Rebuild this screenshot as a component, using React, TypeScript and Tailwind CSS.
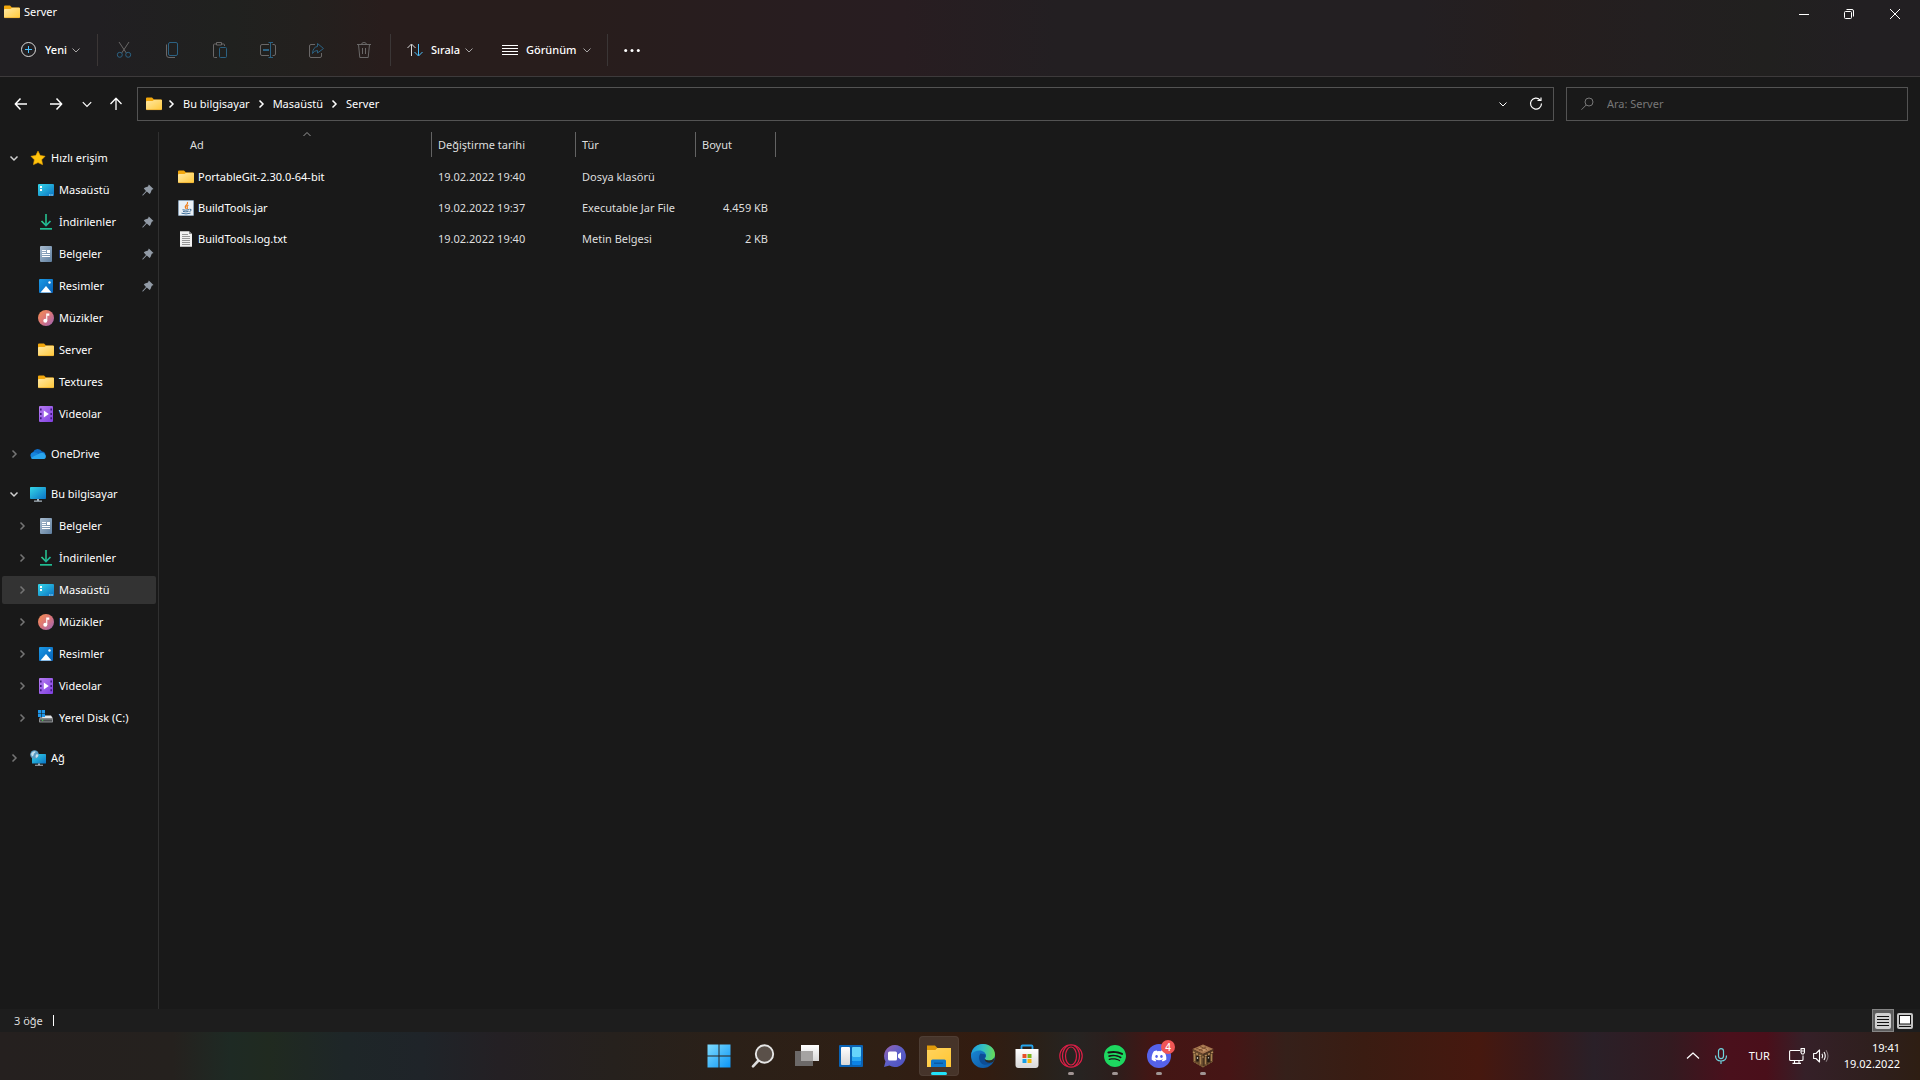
import React from "react";
import { FaDiscord } from "react-icons/fa";
import { SiSpotify } from "react-icons/si";

type IconProps = { className?: string };

function Gradients() {
  return (
    <svg className="absolute size-0" aria-hidden="true">
      <defs>
        <linearGradient id="gFolder" x1="0" y1="0" x2="1" y2="1">
          <stop offset="0" stopColor="#ffe9a6" />
          <stop offset="1" stopColor="#ffc83a" />
        </linearGradient>
        <linearGradient id="gScreen" x1="0" y1="0" x2="1" y2="1">
          <stop offset="0" stopColor="#35d6e8" />
          <stop offset="1" stopColor="#0a72c4" />
        </linearGradient>
        <linearGradient id="gDown" x1="0" y1="0" x2="1" y2="1">
          <stop offset="0" stopColor="#2fd08a" />
          <stop offset="1" stopColor="#14a89e" />
        </linearGradient>
        <linearGradient id="gDoc" x1="0" y1="0" x2="1" y2="1">
          <stop offset="0" stopColor="#a9bccf" />
          <stop offset="1" stopColor="#5f7f9f" />
        </linearGradient>
        <linearGradient id="gPic" x1="0" y1="0" x2="1" y2="1">
          <stop offset="0" stopColor="#1c9ae6" />
          <stop offset="1" stopColor="#0560b8" />
        </linearGradient>
        <linearGradient id="gMusic" x1="0" y1="0" x2="1" y2="1">
          <stop offset="0" stopColor="#f78f4e" />
          <stop offset="0.5" stopColor="#d9757a" />
          <stop offset="1" stopColor="#9a62b8" />
        </linearGradient>
        <linearGradient id="gVideo" x1="0" y1="0" x2="1" y2="1">
          <stop offset="0" stopColor="#b67cf2" />
          <stop offset="1" stopColor="#7f3fe0" />
        </linearGradient>
        <linearGradient id="gWin" x1="0" y1="0" x2="1" y2="1">
          <stop offset="0" stopColor="#7fdcff" />
          <stop offset="1" stopColor="#0c95f5" />
        </linearGradient>
        <linearGradient id="gWhite" x1="0" y1="0" x2="0" y2="1">
          <stop offset="0" stopColor="#ffffff" />
          <stop offset="1" stopColor="#d8d8d8" />
        </linearGradient>
        <linearGradient id="gChat" x1="0" y1="0" x2="1" y2="1">
          <stop offset="0" stopColor="#9a62ae" />
          <stop offset="0.5" stopColor="#5c5fc8" />
          <stop offset="1" stopColor="#4b50c0" />
        </linearGradient>
        <linearGradient id="gEdgeTop" x1="0" y1="0.4" x2="1" y2="0.5">
          <stop offset="0" stopColor="#1e9bdf" />
          <stop offset="0.5" stopColor="#35c1c0" />
          <stop offset="1" stopColor="#66dc55" />
        </linearGradient>
        <linearGradient id="gEdgeBottom" x1="0" y1="0" x2="1" y2="1">
          <stop offset="0" stopColor="#1b8fdc" />
          <stop offset="1" stopColor="#0c4f9c" />
        </linearGradient>
      </defs>
    </svg>
  );
}

function Icon16({ children, className = "size-4" }: { children: React.ReactNode; className?: string }) {
  return (
    <svg viewBox="0 0 16 16" className={`${className} shrink-0`} fill="none" aria-hidden="true">
      {children}
    </svg>
  );
}

const Folder = ({ className }: IconProps) => (
  <Icon16 className={className}>
    <path d="M0 2.500Q0 1.500 1 1.500H6L8 3.500H15Q16 3.500 16 4.500V8H0Z" fill="#f2a70c" />
    <path d="M0 6Q0 5 1 5H6.500L8.200 3.700H15Q16 3.700 16 4.700V13Q16 14 15 14H1Q0 14 0 13Z" fill="url(#gFolder)" />
    <path d="M0.500 13.600H15.500" stroke="#eeb032" strokeWidth="0.800" />
  </Icon16>
);

const Star = () => (
  <Icon16>
    <path d="M8 1.200 10.200 5.600 15 6.300 11.600 9.800 12.500 14.600 8 12.500 3.500 14.600 4.400 9.800 1 6.300 5.800 5.600Z" fill="#ffc40d" stroke="#f2a900" strokeWidth="0.700" strokeLinejoin="round" />
  </Icon16>
);

const Desktop = () => (
  <Icon16>
    <rect y="2" width="16" height="12" rx="1" fill="url(#gScreen)" />
    <path d="M2 4H4V6H2ZM2 7H4V9H2Z" fill="#fff" />
    <path d="M11 13h1.500M13.300 13h1.500" stroke="#c9e6f8" strokeWidth="1" />
  </Icon16>
);

const Download = () => (
  <Icon16>
    <path d="M3.500 7 8 11.500 12.500 7" stroke="url(#gDown)" strokeWidth="1.700" />
    <path d="M8 0V11" stroke="#26c090" strokeWidth="1.600" />
    <rect x="2" y="14" width="12" height="1.700" fill="#20bd92" />
  </Icon16>
);

const Document = () => (
  <Icon16>
    <rect x="2" width="12" height="16" rx="1" fill="url(#gDoc)" />
    <path d="M4 4.500H8M4 6.500H8M4 8.500H12M4 10.500H12" stroke="#fff" strokeWidth="1" />
    <rect x="9" y="4" width="3" height="3" fill="#fff" />
  </Icon16>
);

const Picture = () => (
  <Icon16>
    <rect x="1" y="1" width="14" height="14" rx="1" fill="url(#gPic)" />
    <path d="M2.500 14.500 8 8 13.500 14.500Z" fill="#fff" />
    <circle cx="11.500" cy="4.500" r="1.200" fill="#fff" />
  </Icon16>
);

const Music = () => (
  <Icon16>
    <circle cx="8" cy="8" r="8" fill="url(#gMusic)" />
    <circle cx="7.300" cy="10.800" r="2" fill="#fff" />
    <path d="M8.200 3.500H11.300V5.700H9.300V10.800H8.200Z" fill="#fff" />
  </Icon16>
);

const Video = () => (
  <Icon16>
    <rect x="1" width="14" height="16" rx="1" fill="url(#gVideo)" />
    <path d="M2.800 2.500v12M13.200 2.500v12" stroke="#3f1a80" strokeWidth="1.600" strokeDasharray="2 2.400" />
    <path d="M5.800 4.500 10.800 8 5.800 11.500Z" fill="#fff" />
  </Icon16>
);

const Cloud = () => (
  <Icon16>
    <path d="M3.500 13A3.500 3.500 0 0 1 3 6.200 5 5 0 0 1 12 5.500 3.800 3.800 0 0 1 12.500 13Z" fill="#0f6cc4" />
    <path d="M3.500 13A3.400 3.400 0 0 1 3.500 6.300Q6 5.800 9 8.500L5 13Z" fill="#1583dc" />
    <path d="M3 13Q1.800 13 1 12 8 7.800 11 7 14 6 15.700 9.500 16.500 13 13 13Z" fill="#2aa5ee" />
  </Icon16>
);

const Computer = () => (
  <Icon16>
    <rect y="1" width="16" height="12" rx="0.800" fill="url(#gScreen)" />
    <path d="M7 13h2v1.500h3V15.700H4V14.500h3Z" fill="#a8b4bd" />
  </Icon16>
);

const Disk = () => (
  <Icon16>
    <path d="M4 7.500 5.500 5.500H13L15 8.500H1L2 7.500Z" fill="#e4e6e8" />
    <path d="M0 0h3.200v3.200H0ZM3.800 0H7v3.200H3.800ZM0 3.800h3.200V7H0ZM3.800 3.800H7V7H3.800Z" fill="#1f97ea" />
    <rect x="1" y="8.500" width="14" height="4" rx="0.800" fill="#8e9194" />
    <rect x="2" y="9.500" width="12" height="2" fill="#4b4e50" />
    <rect x="4" y="9.600" width="1.200" height="1.200" fill="#4be04b" />
  </Icon16>
);

const Network = () => (
  <Icon16>
    <rect x="2" y="4" width="14" height="9.500" rx="0.600" fill="url(#gScreen)" />
    <path d="M8 13.500h2v1.200h3v1H5v-1h3Z" fill="#a8b4bd" />
    <circle cx="4.500" cy="4.500" r="4.300" fill="#5a9cc4" />
    <path d="M1.200 3.500Q3 0.800 5.500 1.200 5.500 3 4 3.500 3.800 5.500 2.500 6.500 1 5.500 1.200 3.500ZM6 4.500Q8 4 8.500 5 8 7.500 6 8 5 6.500 6 4.500Z" fill="#c4e0ee" />
  </Icon16>
);

const JarFile = () => (
  <Icon16>
    <rect x="0.500" y="0.500" width="15" height="15" rx="0.500" fill="#e9f0f6" stroke="#8aa0b4" />
    <path d="M9.500 2Q10 4 8 5.500 6.500 7 8.200 8.800M10.500 5.200Q8.600 6 9.300 7.200 9.800 8 9 8.800" stroke="#ef7d1a" strokeWidth="1.200" />
    <path d="M4.500 9.800Q7.500 10.600 11 9.700M5 11.500Q7.800 12.200 10.500 11.500M3.500 13.200Q8 14.600 12.500 13.200M11.500 9.200Q14 9 12.800 10.800L11.500 11.500" stroke="#3f6f99" strokeWidth="1" />
  </Icon16>
);

const TextFile = () => (
  <Icon16>
    <path d="M2 0.300H11L14 3V15.700H2Z" fill="#f1f1f1" />
    <path d="M11 0.300V3H14Z" fill="#8c8c8c" />
    <path d="M4 3.500H10M4 5.500H12M4 7.500H12M4 9.500H12M4 11.500H12M4 13.500H12" stroke="#8b8b8b" strokeWidth="0.900" />
  </Icon16>
);

const Pin = () => (
  <svg viewBox="0 0 12 12" className="size-3 shrink-0" fill="#929ba6" aria-hidden="true">
    <path d="M6.800 0.500 11.500 5 9.800 5.800 8.500 9 7.600 10 4.800 7.600 1 11.500 0.300 11.500 0.500 10.800 4 7 1.800 4.600 3 3.600 6 2.600Z" />
  </svg>
);

function Chevron({ dir, className }: { dir: "down" | "right" | "up"; className: string }) {
  const d = dir === "down" ? "M1.500 3.500 5 7 8.500 3.500" : dir === "up" ? "M1.500 7 5 3.500 8.500 7" : "M3.500 1.500 7 5 3.500 8.500";
  return (
    <svg viewBox="0 0 10 10" className={`${className} shrink-0`} fill="none" stroke="currentColor" aria-hidden="true">
      <path d={d} />
    </svg>
  );
}

function Line({ d, className = "size-4", width = 1, children }: { d?: string; className?: string; width?: number; children?: React.ReactNode }) {
  return (
    <svg viewBox="0 0 16 16" className={`${className} shrink-0`} fill="none" stroke="currentColor" strokeWidth={width} strokeLinejoin="round" aria-hidden="true">
      {d && <path d={d} />}
      {children}
    </svg>
  );
}

function TitleBar() {
  return (
    <div className="flex h-7 items-start justify-between">
      <h1 className="flex items-center gap-1 pt-1 pl-1 text-[11px] leading-4 text-white">
        <Folder />
        Server
      </h1>
      <div className="flex pr-0.5 text-white">
        <button aria-label="Simge durumuna küçült" className="flex h-7 w-[45px] items-center justify-center">
          <svg viewBox="0 0 10 10" className="size-2.5" stroke="currentColor"><path d="M0 5.500H10" /></svg>
        </button>
        <button aria-label="Önceki boyut" className="flex h-7 w-[46px] items-center justify-center">
          <svg viewBox="0 0 10 10" className="size-2.5" fill="none" stroke="currentColor">
            <rect x="0.500" y="2.500" width="7" height="7" rx="1" />
            <path d="M2.500 0.500H8Q9.500 0.500 9.500 2V7.500" />
          </svg>
        </button>
        <button aria-label="Kapat" className="flex h-7 w-[46px] items-center justify-center">
          <svg viewBox="0 0 10 10" className="size-2.5" stroke="currentColor"><path d="M0 0 10 10M10 0 0 10" /></svg>
        </button>
      </div>
    </div>
  );
}

const B = "#2c6283";
const G = "#6a6868";
const commands = [
  { name: "Kes", icon: <Line><g stroke={G}><path d="M3 0 10.300 11M13 0 5.700 11" /></g><g stroke={B}><circle cx="3.800" cy="12.800" r="2.500" /><circle cx="12.200" cy="12.800" r="2.500" /></g></Line> },
  { name: "Kopyala", icon: <Line><path stroke={G} d="M2.500 2.500V13Q2.500 15.500 5 15.500H11" /><rect stroke={B} x="4.500" y="0.500" width="9" height="13" rx="1.500" /></Line> },
  { name: "Yapıştır", icon: <Line><path stroke={G} d="M5 15.500H2.500Q1.500 15.500 1.500 14.500V3Q1.500 2 2.500 2H4.500M9.500 2H11.500Q12.500 2 12.500 3V4M4.500 0.500H9.500V3H4.500Z" /><rect stroke={B} x="7.500" y="5.500" width="7" height="10" rx="1" /></Line> },
  { name: "Yeniden adlandır", icon: <Line><path stroke={G} d="M9 2.500H2Q0.500 2.500 0.500 4V12Q0.500 13.500 2 13.500H9M12.500 2.500H14Q15.500 2.500 15.500 4V12Q15.500 13.500 14 13.500H12.500" /><path stroke={B} d="M8.500 0.500H13M8.500 15.500H13M10.500 0.500V15.500" /><path stroke={B} strokeWidth="2" d="M3 8H9" /></Line> },
  { name: "Paylaş", icon: <Line><path stroke={G} d="M7 2.500H3Q1.500 2.500 1.500 4V14Q1.500 15.500 3 15.500H12Q13.500 15.500 13.500 14V11" /><path stroke={B} d="M9.500 1.500 15.500 6.500 9.500 11V8.500Q6 8.500 4.500 11.500 5 5 9.500 4.500Z" /></Line> },
  { name: "Sil", icon: <Line><path stroke={G} d="M1 2.500H15M5.500 2.500Q5.500 0.500 8 0.500 10.500 0.500 10.500 2.500M2.500 2.500 3.800 15.500H12.200L13.500 2.500M6.500 6V12M9.500 6V12" /></Line> },
];

const Separator = () => <div className="h-8 w-px bg-[#3b3636]" />;

function CommandBar() {
  return (
    <div className="flex h-12 items-center pb-1 text-[11px] leading-4 font-medium text-white">
      <button className="flex h-8 w-[97px] items-center pl-[21px]">
        <Line className="mr-2 size-4">
          <circle cx="7.500" cy="7.500" r="7" stroke="#dadada" />
          <path d="M7.500 4V11M4 7.500H11" stroke="#4cc2ff" />
        </Line>
        Yeni
        <Chevron dir="down" className="ml-1 size-2.5 text-[#a9a6a6]" />
      </button>
      <Separator />
      <div className="flex px-0.5">
        {commands.map((c) => (
          <button key={c.name} aria-label={c.name} disabled className="flex h-8 w-12 items-center justify-center">
            {c.icon}
          </button>
        ))}
      </div>
      <Separator />
      <button className="flex h-8 w-[95px] items-center pl-4">
        <Line className="mr-2 size-4">
          <path d="M4.500 14V2.500M0.500 6 4.500 2 8.500 6" stroke="#dadada" />
          <path d="M11.500 2V13.500M7.500 10 11.500 14 15.500 10" stroke="#4cc2ff" />
        </Line>
        Sırala
        <Chevron dir="down" className="ml-1 size-2.5 text-[#a9a6a6]" />
      </button>
      <button className="flex h-8 w-[121px] items-center pl-4">
        <Line className="mr-2 size-4" d="M0 3.500H16M0 6.500H16M0 9.500H16M0 12.500H16" />
        Görünüm
        <Chevron dir="down" className="ml-1.5 size-2.5 text-[#a9a6a6]" />
      </button>
      <Separator />
      <button aria-label="Daha fazla" className="flex h-8 w-12 items-center justify-center">
        <svg viewBox="0 0 16 16" className="size-4" fill="currentColor"><circle cx="1.700" cy="8.500" r="1.500" /><circle cx="8" cy="8.500" r="1.500" /><circle cx="14.300" cy="8.500" r="1.500" /></svg>
      </button>
    </div>
  );
}

function AddressRow() {
  return (
    <div className="flex h-[55px] items-start pt-2.5 pr-3 pl-1 text-white">
      <nav aria-label="Gezinti" className="flex h-[34px] w-[133px] items-center">
        <button aria-label="Geri" className="flex w-[34px] justify-center"><Line className="size-4" width={1.5} d="M14 8H2.500M7.500 2.500 2.300 8 7.500 13.500" /></button>
        <button aria-label="İleri" className="flex w-9 justify-center"><Line className="size-4" width={1.5} d="M2 8H13.500M8.500 2.500 13.700 8 8.500 13.500" /></button>
        <button aria-label="Son konumlar" className="flex w-[26px] justify-center"><Chevron dir="down" className="size-3" /></button>
        <button aria-label="Yukarı" className="flex w-8 justify-center"><Line className="size-4" width={1.3} d="M8 14V2.500M2.500 8 8 2.300 13.500 8" /></button>
      </nav>
      <div className="flex h-[34px] flex-1 items-center border border-[#535353] pl-2 text-[11px] leading-4">
        <Folder />
        {["Bu bilgisayar", "Masaüstü", "Server"].map((name) => (
          <React.Fragment key={name}>
            <Chevron dir="right" className="mr-1.5 ml-1 size-2.5 stroke-[1.5]" />
            <button className="pr-0.5 pl-px">{name}</button>
          </React.Fragment>
        ))}
        <div className="ml-auto flex">
          <button aria-label="Önceki konumlar" className="flex w-8 items-center justify-center"><Chevron dir="down" className="size-2.5" /></button>
          <button aria-label="Yenile" className="flex w-[34px] items-center justify-center">
            <Line className="size-4" width={1.2} d="M12 3.800A5.500 5.500 0 1 0 13.500 7.500M13 1.500V4.500H9.500" />
          </button>
        </div>
      </div>
      <div className="ml-3 flex h-[34px] w-[342px] items-center border border-[#535353] pl-[13px] text-[#777777]">
        <Line className="mr-[11px] size-4"><circle cx="9" cy="6" r="4" /><path d="M6.200 9 1.500 13.700" /></Line>
        <input type="search" aria-label="Ara: Server" placeholder="Ara: Server" className="min-w-0 flex-1 bg-transparent text-[11px] leading-4 outline-none placeholder:text-[#777777]" />
      </div>
    </div>
  );
}

type Item = { name: string; icon: React.ReactNode; pinned?: boolean; selected?: boolean };
type Group = Item & { open?: boolean; leaf?: boolean; items: Item[] };

const groups: Group[] = [
  {
    name: "Hızlı erişim", icon: <Star />, open: true, leaf: true,
    items: [
      { name: "Masaüstü", icon: <Desktop />, pinned: true },
      { name: "İndirilenler", icon: <Download />, pinned: true },
      { name: "Belgeler", icon: <Document />, pinned: true },
      { name: "Resimler", icon: <Picture />, pinned: true },
      { name: "Müzikler", icon: <Music /> },
      { name: "Server", icon: <Folder /> },
      { name: "Textures", icon: <Folder /> },
      { name: "Videolar", icon: <Video /> },
    ],
  },
  { name: "OneDrive", icon: <Cloud />, items: [] },
  {
    name: "Bu bilgisayar", icon: <Computer />, open: true,
    items: [
      { name: "Belgeler", icon: <Document /> },
      { name: "İndirilenler", icon: <Download /> },
      { name: "Masaüstü", icon: <Desktop />, selected: true },
      { name: "Müzikler", icon: <Music /> },
      { name: "Resimler", icon: <Picture /> },
      { name: "Videolar", icon: <Video /> },
      { name: "Yerel Disk (C:)", icon: <Disk /> },
    ],
  },
  { name: "Ağ", icon: <Network />, items: [] },
];

function Sidebar() {
  return (
    <aside className="flex w-[159px] shrink-0 flex-col gap-3 border-r border-[#303030] pt-3 pr-0.5 pl-0.5 text-[11px] leading-4 text-white">
      {groups.map((g) => (
        <ul key={g.name} className="flex flex-col gap-1">
          <li>
            <button className="flex h-7 w-full items-center pl-[7px]">
              <Chevron dir={g.open ? "down" : "right"} className={g.open ? "size-2.5 stroke-[1.5] text-[#d0d0d0]" : "size-2.5 stroke-[1.5] text-[#757575]"} />
              <span className="mr-[5px] ml-[11px]">{g.icon}</span>
              {g.name}
            </button>
          </li>
          {g.items.map((it) => (
            <li key={it.name}>
              <button className={it.selected ? "flex h-7 w-full items-center rounded-xs bg-[#333333] pl-[15px]" : "flex h-7 w-full items-center pl-[15px]"}>
                {g.leaf ? <span className="w-2.5" /> : <Chevron dir="right" className="size-2.5 stroke-[1.5] text-[#757575]" />}
                <span className="mr-[5px] ml-[11px]">{it.icon}</span>
                {it.name}
                {it.pinned && <span className="mr-0.5 ml-auto"><Pin /></span>}
              </button>
            </li>
          ))}
        </ul>
      ))}
    </aside>
  );
}

const files = [
  { name: "PortableGit-2.30.0-64-bit", icon: <Folder />, date: "19.02.2022 19:40", type: "Dosya klasörü", size: "" },
  { name: "BuildTools.jar", icon: <JarFile />, date: "19.02.2022 19:37", type: "Executable Jar File", size: "4.459 KB" },
  { name: "BuildTools.log.txt", icon: <TextFile />, date: "19.02.2022 19:40", type: "Metin Belgesi", size: "2 KB" },
];

function FileTable() {
  return (
    <main className="min-w-0 flex-1">
      <table className="table-fixed text-left text-[11px] leading-4 text-[#dedede]">
        <colgroup>
          <col className="w-[273px]" />
          <col className="w-36" />
          <col className="w-[120px]" />
          <col className="w-20" />
        </colgroup>
        <thead>
          <tr>
            {["Ad", "Değiştirme tarihi", "Tür", "Boyut"].map((h, i) => (
              <th key={h} scope="col" className="p-0 pb-1 font-normal">
                <div className={i === 0 ? "relative flex h-[25px] items-center border-r border-[#636363] pl-[31px]" : "flex h-[25px] items-center border-r border-[#636363] pl-1.5"}>
                  {h}
                  {i === 0 && <Chevron dir="up" className="absolute -top-[3px] left-[143px] size-2.5 text-[#9a9a9a]" />}
                </div>
              </th>
            ))}
          </tr>
        </thead>
        <tbody>
          {files.map((f) => (
            <tr key={f.name} className="h-[31px]">
              <td className="py-0 pl-[19px] text-white">
                <span className="flex items-center gap-1">{f.icon}{f.name}</span>
              </td>
              <td className="py-0 pl-1.5">{f.date}</td>
              <td className="py-0 pl-1.5 whitespace-nowrap">{f.type}</td>
              <td className="py-0 pr-2 text-right">{f.size}</td>
            </tr>
          ))}
        </tbody>
      </table>
    </main>
  );
}

function StatusBar() {
  return (
    <footer className="flex h-[23px] shrink-0 items-center bg-[#1d1d1d] pl-3.5 text-[11px] leading-4 text-[#dedede]">
      <span>3 öğe</span>
      <span className="ml-2.5 h-[11px] w-px bg-white" />
      <div className="ml-auto flex items-center pr-[7px]">
        <button aria-label="Ayrıntılar" className="flex h-[23px] w-[22px] items-center justify-center border border-[#858585] bg-[#5d5d5d]">
          <svg viewBox="0 0 16 16" className="size-4"><rect width="16" height="16" rx="2" fill="#d0d0d0" /><path d="M2 3.500H14M2 6.500H14M2 9.500H14M2 12.500H14" stroke="#111" /></svg>
        </button>
        <button aria-label="Büyük simgeler" className="ml-[3px] flex items-center">
          <svg viewBox="0 0 16 16" className="size-4"><rect width="16" height="16" rx="2" fill="#c4c4c4" /><rect x="2.500" y="2.500" width="11" height="8.500" fill="#fff" stroke="#111" /><path d="M2 13.500H14" stroke="#111" /></svg>
        </button>
      </div>
    </footer>
  );
}

function Icon24({ children }: { children: React.ReactNode }) {
  return <svg viewBox="0 0 24 24" className="size-6" fill="none" aria-hidden="true">{children}</svg>;
}

const apps: { name: string; icon: React.ReactNode; active?: boolean; running?: boolean; badge?: string }[] = [
  { name: "Başlat", icon: <Icon24><path d="M0.500 0.500H11.500V11.500H0.500ZM12.500 0.500H23.500V11.500H12.500ZM0.500 12.500H11.500V23.500H0.500ZM12.500 12.500H23.500V23.500H12.500Z" fill="url(#gWin)" /></Icon24> },
  { name: "Ara", icon: <Icon24><path d="M7 17 2 22.300" stroke="#dcdcdc" strokeWidth="2.600" strokeLinecap="round" /><circle cx="13.500" cy="10" r="8.700" fill="#5a5049" stroke="#e6e6e6" strokeWidth="1.900" /></Icon24> },
  { name: "Görev görünümü", icon: <Icon24><rect x="6" y="1" width="18" height="16" fill="url(#gWhite)" /><rect y="7" width="18" height="15" fill="#6c6968" /><rect x="6" y="7" width="12" height="10" fill="#a5a3a2" /></Icon24> },
  { name: "Pencere öğeleri", icon: <Icon24><rect y="1" width="24" height="22" rx="1" fill="#0a63b5" /><rect x="2" y="3" width="9" height="18" rx="1" fill="url(#gWhite)" /><rect x="13" y="3" width="9" height="10" rx="1" fill="#66d4fb" /><rect x="13" y="13" width="9" height="4" fill="#2aa8f2" /><rect x="13" y="17" width="9" height="4" rx="1" fill="#0c83e6" /></Icon24> },
  { name: "Sohbet", icon: <Icon24><path d="M12 1A11 11 0 1 1 6.500 21.600L1 23 2.500 17.500A11 11 0 0 1 12 1Z" fill="url(#gChat)" /><rect x="5" y="7.500" width="9" height="9" rx="1.500" fill="#fff" /><path d="M15 10.500 18 8.200V15.800L15 13.500Z" fill="#fff" /></Icon24> },
  { name: "Dosya Gezgini", active: true, icon: <Icon24><path d="M0 1.500H8L10.500 4H23Q24 4 24 5V12H0Z" fill="#e09a0a" /><path d="M0 6H8.500L10.500 4H24V23H0Z" fill="url(#gFolder)" /><path d="M0 6H8.500L10.500 4H24V23H0Z" fill="#ffc42e" fillOpacity="0.600" /><path d="M4 23V17Q4 15.500 5.500 15.500H17.500Q19 15.500 19 17V23Z" fill="#0e78cc" /><path d="M7 18.500H16V20H7Z" fill="#0a5aa4" /></Icon24> },
  { name: "Microsoft Edge", icon: <Icon24><circle cx="12" cy="12" r="12" fill="url(#gEdgeBottom)" /><path d="M0.200 10.500C1.500 3.500 6 0 12 0 18.500 0 24 4.500 24 10.500 24 14.500 21 16.500 18 16.500 15 16.500 14 15.500 14 14.500 14 13.500 15 13.500 15 11.500 15 9 12 6.500 8.500 6.500 4.500 6.500 1.500 8.500 0.200 10.500Z" fill="url(#gEdgeTop)" /><path d="M9.500 9.500C7.500 12 7.500 16 10 19 12.500 21.500 17 21.500 22.300 18 19.500 19 13.500 18.500 13.300 14 14.500 13.500 15 12.500 14.500 10.500Z" fill="#0d4d95" /><path d="M22.500 17.500Q18.500 20 14.800 17.400 13.300 16 13.700 14.300 14.200 16.500 18 16.500 21.500 16.500 23.500 13.500Z" fill="#2b2a24" /></Icon24> },
  { name: "Microsoft Store", icon: <Icon24><path d="M6.500 6V2.500Q6.500 1.500 7.500 1.500H16.500Q17.500 1.500 17.500 2.500V6" stroke="#25a5ee" strokeWidth="1.800" /><path d="M0.500 5H23.500V21Q23.500 24 20.500 24H3.500Q0.500 24 0.500 21Z" fill="url(#gWhite)" /><path d="M7.500 10H11.500V14H7.500Z" fill="#e94f2a" /><path d="M12.500 10H16.500V14H12.500Z" fill="#79b51c" /><path d="M7.500 15H11.500V19H7.500Z" fill="#14a0e8" /><path d="M12.500 15H16.500V19H12.500Z" fill="#f5b60d" /></Icon24> },
  { name: "Opera GX", running: true, icon: <Icon24><g stroke="#dc1f47" strokeWidth="1.200"><circle cx="12" cy="12" r="11.200" /><ellipse cx="12" cy="12" rx="5.500" ry="9" /><path d="M9 1.500Q3.500 5 3.500 12T9 22.500M15 1.500Q20.500 5 20.500 12T15 22.500" /></g></Icon24> },
  { name: "Spotify", running: true, icon: <span className="flex size-[22px] items-center justify-center rounded-full bg-[#191414]"><SiSpotify className="size-[22px] text-[#1ed760]" /></span> },
  { name: "Discord", running: true, badge: "4", icon: <span className="flex size-6 items-center justify-center rounded-full bg-[#5562ea]"><FaDiscord className="size-4 text-white" /></span> },
  { name: "Minecraft", running: true, icon: <Icon24><path d="M12 0.500 22.500 5 12 10 1.500 5Z" fill="#a87850" /><path d="M12 2.500 18 5 12 7.800 6 5Z" fill="#c49468" /><path d="M5 4 12 7M9 2.500 16 5.500M15 3 8 6.500" stroke="#7a4e30" /><path d="M1.500 5 12 10V23.500L2.500 18Z" fill="#66492c" /><path d="M22.500 5 12 10V23.500L21.500 18Z" fill="#4d3520" /><path d="M2 8 12 13M22 8 12 13" stroke="#b58b5a" strokeWidth="1.600" strokeDasharray="2 1.500" /><path d="M3.500 10V17M9.500 13V20.500M14.500 13V20.500M20.500 10V17" stroke="#a98250" strokeWidth="1.500" /><path d="M6.500 12V17.500M17.500 12V18" stroke="#211811" strokeWidth="2.500" /><path d="M6.500 13V15M17.500 13V14.500" stroke="#b8b0a4" strokeWidth="1.200" /><path d="M2.500 17.500 12 23M21.500 17.500 12 23" stroke="#8a683e" strokeDasharray="2 1" /></Icon24> },
];

function Taskbar() {
  return (
    <div className="grid h-12 shrink-0 grid-cols-[1fr_auto_1fr] items-center bg-[linear-gradient(90deg,#25201f_0%,#25211e_9%,#1e2a24_12%,#202a20_14%,#1e2628_18%,#1f2429_22%,#242024_26%,#26211d_32%,#2b2018_38%,#2f1f14_46%,#331c10_51%,#2a2018_54%,#262422_56%,#2c1e1c_58%,#431614_60%,#461515_64%,#35201a_67%,#3a1c12_71%,#46180f_77%,#38191a_80%,#2a2028_83%,#331a20_87%,#4a101c_90%,#4a0f1a_92%,#352028_94%,#2e1f1c_98%,#2e1e13_100%)] pl-0.5 text-white">
      <div />
      <nav aria-label="Görev çubuğu" className="flex gap-1">
        {apps.map((a) => (
          <button key={a.name} aria-label={a.name} className={a.active ? "relative flex size-10 items-center justify-center rounded-sm border border-white/5 bg-white/10" : "relative flex size-10 items-center justify-center"}>
            {a.icon}
            {a.active && <span className="absolute bottom-0 h-[3px] w-4 rounded-full bg-[#22e4fb]" />}
            {a.running && <span className="absolute bottom-px h-[3px] w-1.5 rounded-full bg-[#a09594]" />}
            {a.badge && <span className="absolute top-1 right-1 flex size-[14px] items-center justify-center rounded-full bg-[#f05656] text-[10px] leading-3 font-medium">{a.badge}</span>}
          </button>
        ))}
      </nav>
      <div className="flex items-center justify-end pr-5 text-[11px] leading-4">
        <button aria-label="Gizli simgeler" className="flex w-7 justify-center"><Line d="M2 10.500 8 5 14 10.500" width={1.2} /></button>
        <button aria-label="Mikrofon" className="flex w-7 justify-center text-[#6fd5df]">
          <Line width={1.2}><rect x="5.500" y="0.600" width="5" height="10" rx="2.500" /><path d="M2.500 7.500Q2.500 13 8 13 13.500 13 13.500 7.500M8 13V16" /></Line>
        </button>
        <button className="ml-3.5">TUR</button>
        <button aria-label="Ağ ve ses" className="ml-[19px] flex items-center gap-2">
          <Line width={1.1}><path d="M11 2.500H1.500Q0.600 2.500 0.600 3.500V11.500Q0.600 12.500 1.500 12.500H13Q14 12.500 14 11.500V7.500M5.500 12.500V15.500M10 12.500V15.500M3.500 15.400H12M12 0.600H15.500V4.500L14.500 6H13L12 4.500ZM12 3H15.500" /></Line>
          <Line width={1.1}><path d="M0.600 5.500H3L6.500 2V14L3 10.500H0.600ZM9 5.800Q10.300 8 9 10.200M11 4Q13.500 8 11 12" /><path d="M13 2.200Q17 8 13 13.800" opacity="0.400" /></Line>
        </button>
        <button className="ml-[15px] text-right">
          <span className="block">19:41</span>
          <span className="block">19.02.2022</span>
        </button>
      </div>
    </div>
  );
}

export default function App() {
  return (
    <div className="flex h-screen flex-col overflow-hidden bg-[#191919] font-['Noto_Sans','Open_Sans',sans-serif]">
      <Gradients />
      <header className="border-b border-[#3d3a3b] bg-[linear-gradient(90deg,#211f22_0%,#211f22_5%,#20211f_12%,#23201e_16%,#281d1c_20%,#281d1c_30%,#281d20_42%,#281d21_47%,#231f22_55%,#231f22_74%,#251e1e_80%,#231f20_86%,#21201f_92%,#221f22_97%,#221f22_100%)]">
        <TitleBar />
        <CommandBar />
      </header>
      <AddressRow />
      <div className="flex min-h-0 flex-1">
        <Sidebar />
        <FileTable />
      </div>
      <StatusBar />
      <Taskbar />
    </div>
  );
}
